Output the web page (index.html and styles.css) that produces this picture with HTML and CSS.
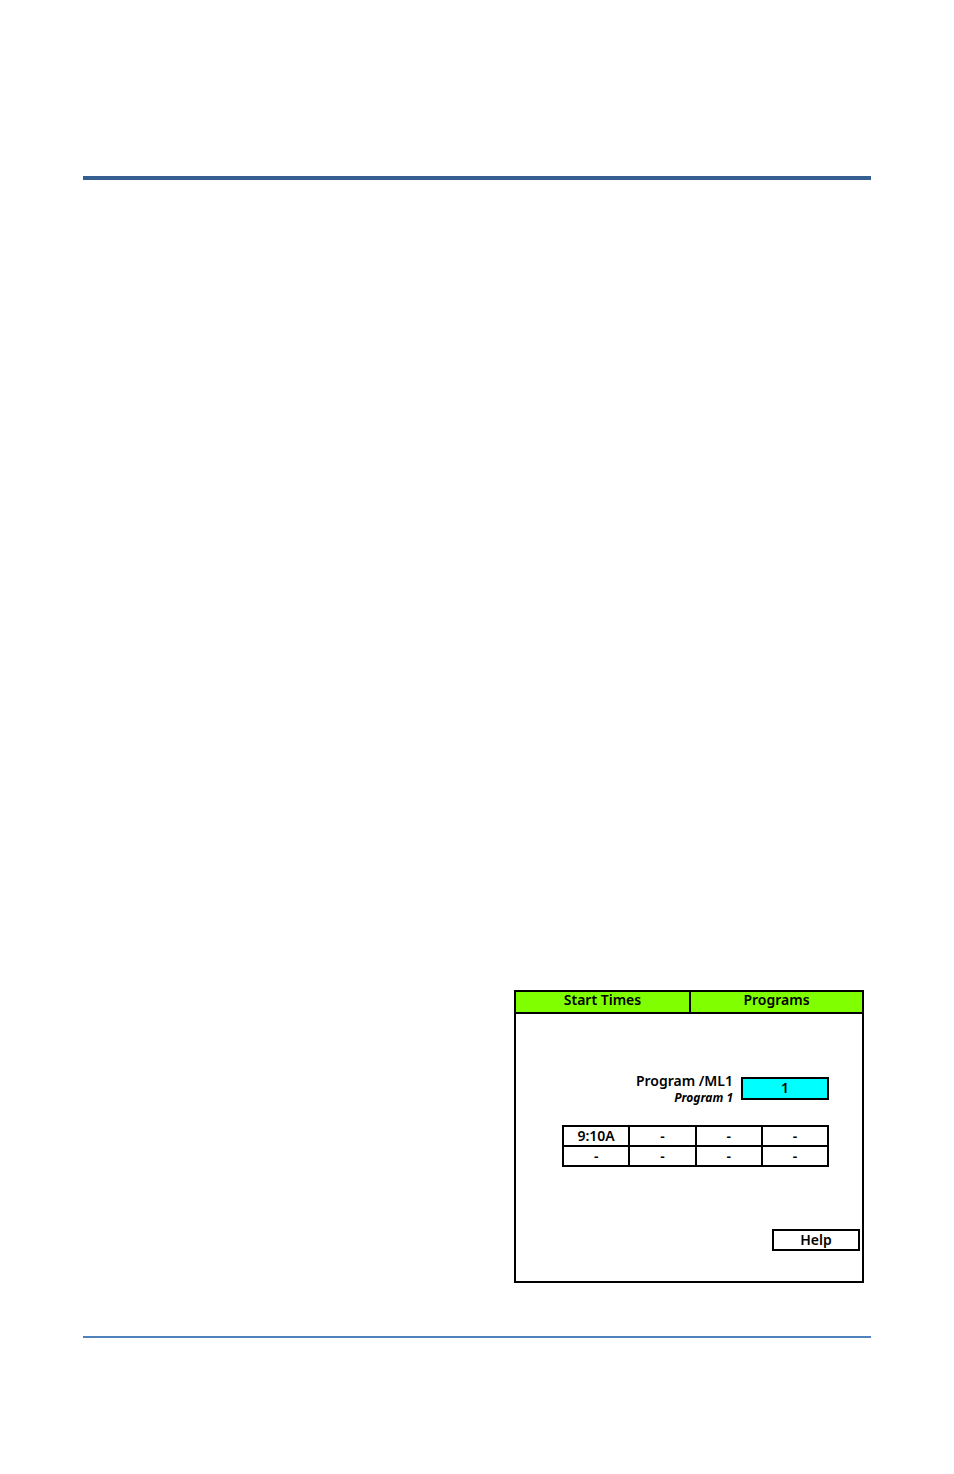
FILE: index.html
```html
<!DOCTYPE html>
<html lang="en">
<head>
    <meta charset="UTF-8">
    <meta name="viewport" content="width=device-width, initial-scale=1.0">
    <title>Start Times</title>
    <link rel="stylesheet" href="styles.css">
</head>
<body>
    <header class="page-header"></header>
    <main class="page-content">
        <section class="screen">
            <div class="title-bar">
                <div class="title">Start Times</div>
                <div class="title">Programs</div>
            </div>
            <div class="screen-body">
                <div class="program-row">
                    <label class="program-label" for="program">
                        Program /ML1
                        <span class="program-name">Program 1</span>
                    </label>
                    <input class="program-input" type="text" id="program" value="1">
                </div>
                <table class="start-times">
                    <tr><td>9:10A</td><td>-</td><td>-</td><td>-</td></tr>
                    <tr><td>-</td><td>-</td><td>-</td><td>-</td></tr>
                </table>
            </div>
            <div class="screen-footer">
                <button class="help-button" type="button">Help</button>
            </div>
        </section>
    </main>
    <footer class="page-footer"></footer>
</body>
</html>
```
FILE: styles.css
```css
* {
    box-sizing: border-box;
}

body {
    display: flex;
    flex-direction: column;
    min-height: 100vh;
    margin: 0;
    padding: 0 83px;
    background-color: white;
    color: black;
    font-family: "Noto Sans", "Open Sans", sans-serif;
    font-size: 14px;
    font-weight: 600;
    line-height: 18px;
}

.page-header {
    height: 180px;
    border-bottom: 4px solid #365f91;
}

.page-content {
    flex: 1;
    display: flex;
    justify-content: flex-end;
    align-items: flex-end;
    padding: 0 7px 53px 0;
}

.page-footer {
    height: 138px;
    border-top: 2px solid #4f81bd;
}

.screen {
    width: 350px;
    border: 2px solid black;
}

.title-bar {
    display: grid;
    grid-template-columns: 1fr 1fr;
    background-color: #80ff00;
    border-bottom: 2px solid black;
}

.title {
    padding-bottom: 4px;
    line-height: 16px;
    text-align: center;
}

.title + .title {
    border-left: 2px solid black;
}

.screen-body {
    padding: 58px 33px 62px 46px;
}

.program-row {
    display: flex;
    justify-content: flex-end;
    gap: 8px;
    margin-bottom: 19px;
}

.program-label {
    text-align: right;
}

.program-name {
    display: block;
    font-size: 12px;
    font-style: italic;
    font-weight: 700;
    line-height: 16px;
}

.program-input {
    width: 88px;
    height: 23px;
    margin-top: 5px;
    padding: 0 0 2px;
    border: 2px solid black;
    border-radius: 0;
    background-color: #00ffff;
    color: inherit;
    font: inherit;
    text-align: center;
}

.start-times {
    width: 100%;
    border-collapse: collapse;
    table-layout: fixed;
}

.start-times td {
    height: 20px;
    padding: 0;
    border: 2px solid black;
    text-align: center;
}

.screen-footer {
    display: flex;
    justify-content: flex-end;
    padding: 0 2px 30px 0;
}

.help-button {
    width: 88px;
    height: 22px;
    padding: 0;
    border: 2px solid black;
    border-radius: 0;
    background-color: white;
    color: inherit;
    font: inherit;
    line-height: 18px;
}
```
